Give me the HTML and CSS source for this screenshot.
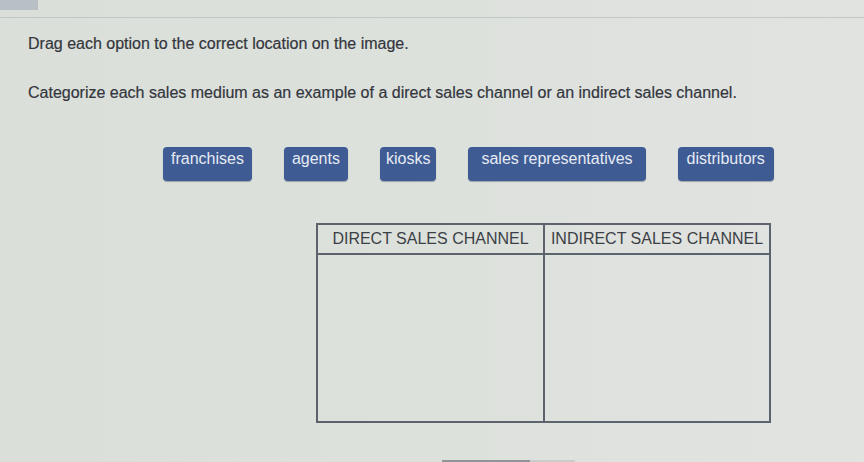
FILE: index.html
```html
<!DOCTYPE html>
<html>
<head>
<meta charset="utf-8">
<link rel="stylesheet" href="styles.css">
</head>
<body>
<div class="topbar"><div class="tab"></div></div>
<main class="content">
  <p class="instr first">Drag each option to the correct location on the image.</p>
  <p class="instr second">Categorize each sales medium as an example of a direct sales channel or an indirect sales channel.</p>
  <div class="chips">
    <span class="chip">franchises</span>
    <span class="chip">agents</span>
    <span class="chip">kiosks</span>
    <span class="chip">sales representatives</span>
    <span class="chip">distributors</span>
  </div>
  <div class="board">
    <div class="head">DIRECT SALES CHANNEL</div>
    <div class="head">INDIRECT SALES CHANNEL</div>
    <div class="cell"></div>
    <div class="cell"></div>
  </div>
</main>
<div class="footer"><div class="btn"></div><div class="btn light"></div></div>
</body>
</html>
```

FILE: styles.css
```css
* { box-sizing: border-box; }
html, body { margin: 0; padding: 0; }
body {
  width: 864px;
  height: 462px;
  overflow: hidden;
  background: linear-gradient(90deg, #dbdfda 0%, #dde1dc 50%, #e1e3e0 100%);
  font-family: "Liberation Sans", Arial, sans-serif;
  color: #33363d;
  display: flex;
  flex-direction: column;
}
.topbar {
  height: 18px;
  border-bottom: 1px solid #c3c7c8;
}
.tab {
  width: 38px;
  height: 10px;
  background: #b8c0c6;
}
.content {
  padding-left: 28px;
  flex: 1;
}
.instr {
  margin: 0;
  font-size: 16px;
  line-height: 18px;
  color: #33363d;
  -webkit-text-stroke: 0.2px #33363d;
}
.first { margin-top: 17px; }
.second { margin-top: 31px; }
.chips {
  display: flex;
  gap: 32px;
  margin-top: 45px;
  margin-left: 135px;
  align-items: flex-start;
}
.chip {
  background: #3f5b94;
  color: #e6ebf3;
  font-size: 16px;
  line-height: 18px;
  padding: 3px 8px 13px;
  border-radius: 4px;
  box-shadow: 0 1px 1px rgba(40, 50, 70, 0.35);
}
.chip:nth-child(3) { padding: 3px 6px 13px; }
.chip:nth-child(4) { padding: 3px 13px 13px; }
.chip:nth-child(5) { padding: 3px 9px 13px; }
.board {
  margin-top: 42px;
  margin-left: 288px;
  width: 455px;
  height: 200px;
  border: 2px solid #5d636c;
  display: grid;
  grid-template-columns: 227px 1fr;
  grid-template-rows: 30px 1fr;
}
.head {
  font-size: 16px;
  line-height: 28px;
  text-align: center;
  color: #3b3f46;
  border-bottom: 2px solid #5d636c;
  white-space: nowrap;
}
.head:first-child, .cell:nth-child(3) {
  border-right: 2px solid #5d636c;
}
.footer {
  height: 2px;
  display: flex;
  padding-left: 442px;
}
.btn {
  width: 88px;
  height: 2px;
  background: #8f9499;
}
.btn.light {
  width: 45px;
  background: #c9cccd;
}
```
